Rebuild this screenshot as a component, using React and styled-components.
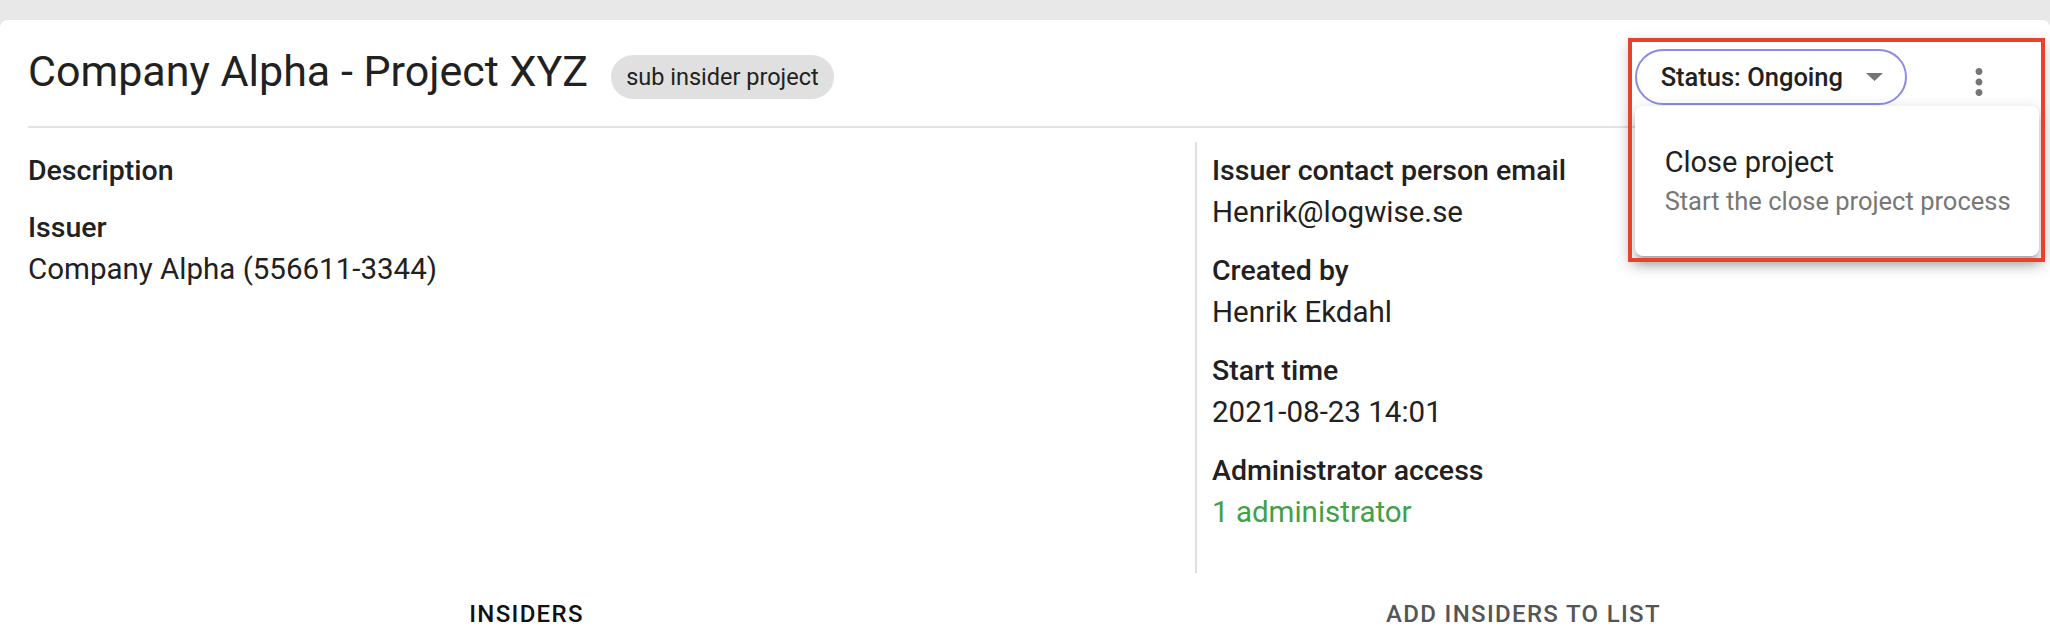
import styled, { createGlobalStyle } from "styled-components";

const GlobalStyle = createGlobalStyle`
  body {
    margin: 0;
    background: #e8e8e8;
    font-family: Roboto, "Liberation Sans", sans-serif;
    color: #212121;
  }
`;

const Page = styled.div`
  padding-top: 20px;
  height: 620px;
  overflow: hidden;
`;

const Card = styled.div`
  background: #fff;
  border-radius: 8px 8px 0 0;
  padding: 29px 28px 0;
  height: 100%;
  box-sizing: border-box;
`;

const Header = styled.div`
  display: flex;
  align-items: center;
  height: 56px;
`;

const Title = styled.h1`
  margin: 0 0 13px;
  font-size: 43px;
  font-weight: 400;
  line-height: 52px;
  color: #212121;
`;

const Chip = styled.span`
  margin-left: 23px;
  height: 44px;
  padding: 0 15px;
  display: inline-flex;
  align-items: center;
  border-radius: 22px;
  background: #e0e0e0;
  font-size: 23.5px;
  color: #222;
`;

const Spacer = styled.div`
  flex: 1;
`;

const Actions = styled.div`
  position: relative;
  display: flex;
  align-items: center;
`;

const StatusButton = styled.button`
  height: 56px;
  display: flex;
  align-items: center;
  gap: 23px;
  padding: 0 22px 0 24px;
  border: 2px solid #8c8ce6;
  border-radius: 28px;
  background: #fff;
  font-family: inherit;
  font-size: 25.5px;
  font-weight: 500;
  color: #212121;
`;

const KebabButton = styled.button`
  width: 56px;
  height: 56px;
  margin: 0 15px 0 44px;
  padding: 0 0 2px;
  border: none;
  background: transparent;
  display: flex;
  align-items: flex-end;
  justify-content: center;
  box-sizing: border-box;
`;

const Menu = styled.div`
  position: absolute;
  top: calc(100% + 1px);
  left: 0;
  width: 404px;
  box-sizing: border-box;
  padding: 36px 30px 37px;
  background: #fff;
  border-radius: 8px;
  white-space: nowrap;
  box-shadow: 0 5px 5px -3px rgba(0, 0, 0, 0.2), 0 8px 10px 1px rgba(0, 0, 0, 0.14),
    0 3px 14px 2px rgba(0, 0, 0, 0.12);
`;

const MenuPrimary = styled.div`
  font-size: 29px;
  line-height: 41px;
  color: #212121;
`;

const MenuSecondary = styled.div`
  font-size: 25.5px;
  line-height: 36px;
  color: #777;
`;

const Annotation = styled.div`
  position: absolute;
  right: -23px;
  top: -11px;
  width: 417px;
  height: 224px;
  box-sizing: border-box;
  border: 4px solid #e8412c;
  box-shadow: 0 4px 14px rgba(0, 0, 0, 0.18);
  pointer-events: none;
`;

const Divider = styled.div`
  margin-top: 21px;
  height: 2px;
  background: #e4e4e4;
`;

const Details = styled.div`
  margin-top: 14px;
  display: grid;
  grid-template-columns: 1167px 1fr;
`;

const Column = styled.div`
  display: flex;
  flex-direction: column;
  gap: 17px;
  padding: 9px 0 39px;
  ${(p) => (p.divided ? "border-left: 2px solid #e0e0e0; padding-left: 15px;" : "")}
`;

const Label = styled.div`
  font-size: 28.5px;
  font-weight: 500;
  line-height: 40px;
  color: #212121;
`;

const Value = styled.div`
  font-size: 29.5px;
  line-height: 43px;
  color: ${(p) => (p.accent ? "#43a047" : "#212121")};
`;

const Tabs = styled.div`
  display: flex;
`;

const Tab = styled.div`
  flex: 1;
  text-align: center;
  padding-top: 25px;
  font-size: 24px;
  font-weight: 500;
  line-height: 32px;
  letter-spacing: 0.055em;
  text-transform: uppercase;
  color: ${(p) => (p.active ? "#111" : "#555")};
`;

function Field({ label, value, accent }) {
  return (
    <div>
      <Label>{label}</Label>
      {value && <Value accent={accent}>{value}</Value>}
    </div>
  );
}

export default function App() {
  return (
    <>
      <GlobalStyle />
      <Page>
        <Card>
          <Header>
            <Title>Company Alpha - Project XYZ</Title>
            <Chip>sub insider project</Chip>
            <Spacer />
            <Actions>
              <StatusButton>
                Status: Ongoing
                <svg width="17" height="8" viewBox="0 0 17 8">
                  <path d="M0 0h17L8.5 8z" fill="#757575" />
                </svg>
              </StatusButton>
              <KebabButton>
                <svg width="42" height="42" viewBox="0 0 24 24">
                  <path
                    fill="#757575"
                    d="M12 8c1.1 0 2-.9 2-2s-.9-2-2-2-2 .9-2 2 .9 2 2 2zm0 2c-1.1 0-2 .9-2 2s.9 2 2 2 2-.9 2-2-.9-2-2-2zm0 6c-1.1 0-2 .9-2 2s.9 2 2 2 2-.9 2-2-.9-2-2-2z"
                  />
                </svg>
              </KebabButton>
              <Menu>
                <MenuPrimary>Close project</MenuPrimary>
                <MenuSecondary>Start the close project process</MenuSecondary>
              </Menu>
              <Annotation />
            </Actions>
          </Header>
          <Divider />
          <Details>
            <Column>
              <Field label="Description" />
              <Field label="Issuer" value="Company Alpha (556611-3344)" />
            </Column>
            <Column divided>
              <Field label="Issuer contact person email" value="Henrik@logwise.se" />
              <Field label="Created by" value="Henrik Ekdahl" />
              <Field label="Start time" value="2021-08-23 14:01" />
              <Field label="Administrator access" value="1 administrator" accent />
            </Column>
          </Details>
          <Tabs>
            <Tab active>Insiders</Tab>
            <Tab>Add insiders to list</Tab>
          </Tabs>
        </Card>
      </Page>
    </>
  );
}
